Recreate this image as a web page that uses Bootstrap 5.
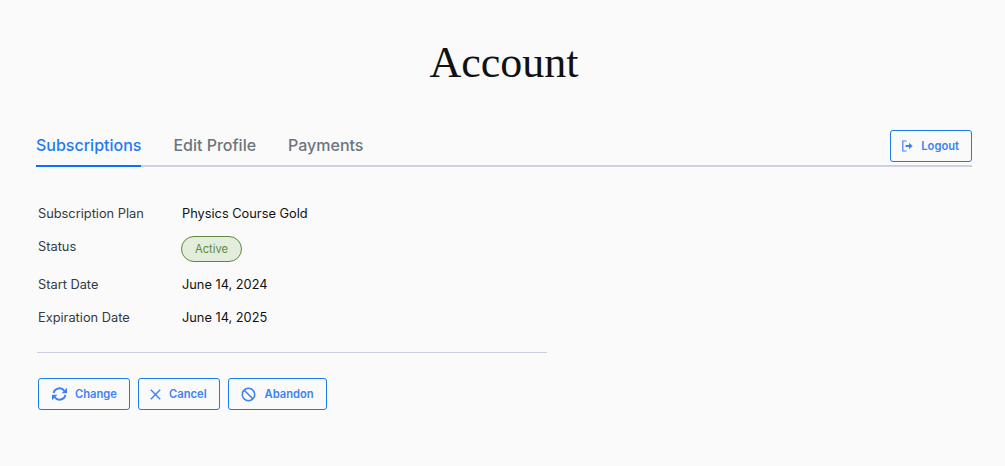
<!DOCTYPE html>
<html lang="en">
<head>
    <meta charset="UTF-8">
    <meta name="viewport" content="width=device-width, initial-scale=1.0">
    <title>Account</title>
    <link href="https://cdn.jsdelivr.net/npm/bootstrap@5.3.0/dist/css/bootstrap.min.css" rel="stylesheet">
    <style>
    body {
        background-color: #fafafa;
        font-family: "Inter", sans-serif;
        color: #212529;
    }
    .page-wrap {
        padding: 0 33px 0 36px;
    }
    .page-title {
        font-family: "Liberation Serif", serif;
        font-size: 44px;
        font-weight: 400;
        line-height: 52px;
        color: #111;
        text-align: center;
        margin: 37px 0 0;
    }
    .tab-bar {
        margin-top: 41px;
        height: 37px;
        border-bottom: 2px solid #ccd0e0;
    }
    .tab-link {
        display: block;
        font-size: 16px;
        font-weight: 500;
        line-height: 24px;
        padding-top: 3px;
        height: 37px;
        color: #6c757d;
        text-decoration: none;
    }
    .tab-link.is-active {
        color: #1f7bf2;
        border-bottom: 2px solid #0d6efd;
    }
    .tab-list {
        gap: 32px;
    }
    .act-btn {
        display: inline-flex;
        align-items: center;
        height: 32px;
        font-size: 11.2px;
        font-weight: 600;
        color: #3b82f6;
        background: transparent;
        border: 1px solid #1a7bf0;
        border-radius: 3px;
        padding: 0 12px 0 11px;
    }
    .act-btn svg {
        flex: none;
    }
    .info-list {
        margin-top: 36px;
        padding-left: 2px;
        font-size: 12.8px;
    }
    .info-row {
        display: flex;
        height: 33px;
        line-height: 22px;
    }
    .info-row.status-row {
        height: 38px;
    }
    .info-label {
        width: 144px;
        color: #343a40;
    }
    .info-value {
        color: #111;
    }
    .status-pill {
        display: block;
        margin-left: -1px;
        height: 26px;
        line-height: 24px;
        padding: 0 13px;
        font-size: 11.2px;
        font-weight: 400;
        color: #5b8a3c;
        background: #e4ecdc;
        border: 1px solid #5b8a3c;
        border-radius: 13px;
    }
    .info-rule {
        width: 510px;
        margin: 12px 0 25px 1px;
        border: 0;
        border-top: 1px solid #ccd0e6;
        opacity: 1;
    }
    .btn-row {
        padding-left: 2px;
    }
    </style>
</head>
<body>
    <div class="page-wrap">
        <h1 class="page-title">Account</h1>

        <div class="tab-bar d-flex justify-content-between">
            <div class="tab-list d-flex">
                <a class="tab-link is-active" href="#">Subscriptions</a>
                <a class="tab-link" href="#">Edit Profile</a>
                <a class="tab-link" href="#">Payments</a>
            </div>
            <button class="act-btn" type="button">
                <svg class="me-2" width="11" height="12" viewBox="0 0 11 12" fill="none" stroke="currentColor" stroke-width="1.2"><path d="M4.5 1H.8v10h3.7"/><path d="M3.5 6h4" stroke-width="2"/><path d="M7 2.8 10.6 6 7 9.2z" fill="currentColor" stroke="none"/></svg>
                Logout
            </button>
        </div>

        <div class="info-list">
            <div class="info-row">
                <div class="info-label">Subscription Plan</div>
                <div class="info-value">Physics Course Gold</div>
            </div>
            <div class="info-row status-row">
                <div class="info-label">Status</div>
                <div><span class="status-pill">Active</span></div>
            </div>
            <div class="info-row">
                <div class="info-label">Start Date</div>
                <div class="info-value">June 14, 2024</div>
            </div>
            <div class="info-row">
                <div class="info-label">Expiration Date</div>
                <div class="info-value">June 14, 2025</div>
            </div>
        </div>

        <hr class="info-rule">

        <div class="btn-row d-flex gap-2">
            <button class="act-btn" type="button">
                <svg class="me-2" width="17" height="14" viewBox="-1 0 17 14" fill="none" stroke="currentColor" stroke-width="2"><path d="M2.6 6A6 6 0 0 1 13.4 4"/><path d="M14.4 8A6 6 0 0 1 3.6 10"/><path d="M16 .8v5.4h-5.4z" fill="currentColor" stroke="none"/><path d="M1 13.2V7.8h5.4z" fill="currentColor" stroke="none"/></svg>
                Change
            </button>
            <button class="act-btn" type="button">
                <svg class="me-2" width="11" height="11" viewBox="0 0 11 11" fill="none" stroke="currentColor" stroke-width="1.4"><path d="M.8.8l9.4 9.4M10.2.8.8 10.2"/></svg>
                Cancel
            </button>
            <button class="act-btn" type="button">
                <svg class="me-2" width="17" height="15" viewBox="0 0 17 15" fill="none" stroke="currentColor" stroke-width="1.6"><circle cx="8.5" cy="7.5" r="6.2"/><path d="M4.2 3.2l8.6 8.6"/></svg>
                Abandon
            </button>
        </div>
    </div>

    <script src="https://cdn.jsdelivr.net/npm/bootstrap@5.3.0/dist/js/bootstrap.bundle.min.js"></script>
</body>
</html>
